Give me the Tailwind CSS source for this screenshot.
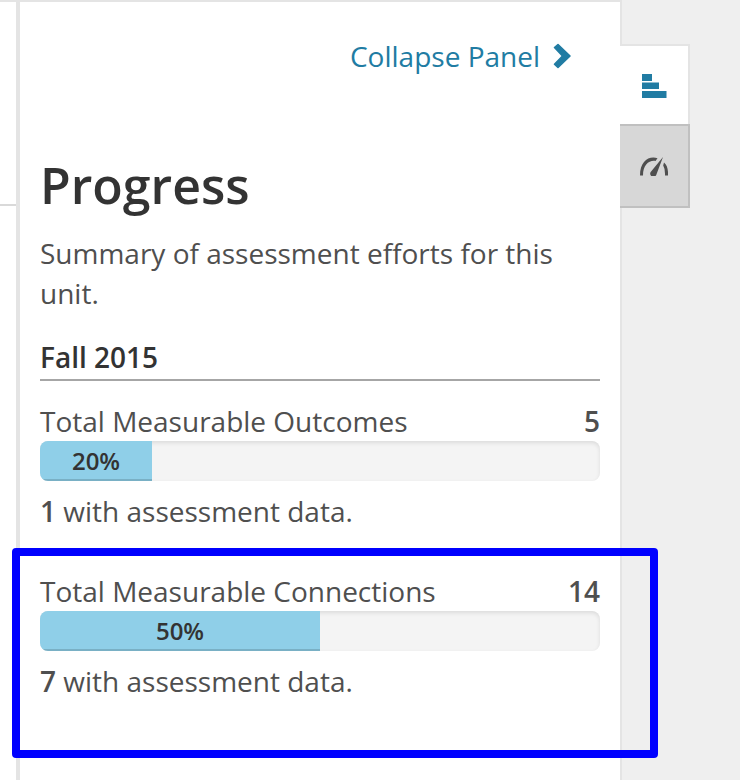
<!DOCTYPE html>
<html lang="en">
<head>
  <meta charset="UTF-8">
  <meta name="viewport" content="width=device-width, initial-scale=1.0">
  <title>Progress</title>
  <script src="https://cdn.jsdelivr.net/npm/@tailwindcss/browser@4"></script>
</head>
<body class="bg-[#efefef] font-['Open_Sans',sans-serif] text-[28px] leading-10 text-[#4f4f4f]">
  <div class="flex min-h-screen overflow-hidden">
    <!-- Edge of the page content -->
    <div class="w-4 shrink-0 border-t-2 border-[#e4e4e4] bg-white">
      <div class="h-51 border-b-2 border-[#d9d9d9]"></div>
    </div>

    <!-- Side panel -->
    <main class="min-w-0 flex-1 border-t-2 border-r-2 border-l-4 border-[#e4e4e4] bg-white px-5 pt-[34px]">
      <div class="flex justify-end pr-7">
        <button type="button" class="flex items-center gap-3 text-[#217ca3]">
          Collapse Panel
          <svg class="h-7 w-5" viewBox="0 0 20 28" fill="currentColor" stroke="currentColor" stroke-width="1" stroke-linejoin="round" aria-hidden="true">
            <path d="M2.500 5.500 6 2.500 18 14 6 25.500 2.500 22.200 10.500 14z" stroke-width="1.600" />
          </svg>
        </button>
      </div>

      <h1 class="mt-[79px] text-[50px] leading-[60px] font-semibold text-[#333]">Progress</h1>
      <p class="mt-[18px]">Summary of assessment efforts for this unit.</p>
      <h2 class="mt-6 border-b-2 border-[#a6a6a6] pb-0.5 font-semibold text-[#333]">Fall 2015</h2>

      <section class="mt-5">
        <div class="flex justify-between">
          <span id="outcomes-label">Total Measurable Outcomes</span>
          <strong class="font-semibold">5</strong>
        </div>
        <div class="h-10 overflow-hidden rounded-lg bg-[#f4f4f4] shadow-[inset_0_2px_4px_rgba(0,0,0,0.1)]" role="progressbar" aria-labelledby="outcomes-label" aria-valuenow="20" aria-valuemin="0" aria-valuemax="100">
          <div class="h-full bg-[#8fcfe8] text-center text-2xl leading-10 font-semibold text-[#333] shadow-[inset_0_-2px_0_rgba(0,0,0,0.15)]" style="width: 20%">20%</div>
        </div>
        <p class="mt-2.5"><strong class="font-semibold">1</strong> with assessment data.</p>
      </section>

      <section class="relative mt-10">
        <div class="flex justify-between">
          <span id="connections-label">Total Measurable Connections</span>
          <strong class="font-semibold">14</strong>
        </div>
        <div class="h-10 overflow-hidden rounded-lg bg-[#f4f4f4] shadow-[inset_0_2px_4px_rgba(0,0,0,0.1)]" role="progressbar" aria-labelledby="connections-label" aria-valuenow="50" aria-valuemin="0" aria-valuemax="100">
          <div class="h-full bg-[#8fcfe8] text-center text-2xl leading-10 font-semibold text-[#333] shadow-[inset_0_-2px_0_rgba(0,0,0,0.15)]" style="width: 50%">50%</div>
        </div>
        <p class="mt-2.5"><strong class="font-semibold">7</strong> with assessment data.</p>
        <!-- Highlight frame -->
        <div class="pointer-events-none absolute -top-[23px] -right-[58px] -bottom-[57px] -left-7 rounded-sm border-8 border-[#00f]"></div>
      </section>
    </main>

    <!-- Panel tabs -->
    <nav class="-ml-0.5 w-[120px] shrink-0 pt-11">
      <button type="button" aria-label="Progress" class="flex h-20 w-[70px] items-center justify-center border-t-2 border-r-2 border-[#e4e4e4] bg-white pt-0.5 text-[#217ca3]">
        <svg class="h-6 w-[26px]" viewBox="0 0 26 24" fill="currentColor" aria-hidden="true">
          <path d="M1 0h10v7H1zM1 8.500h17v6.500H1zM1 17h24.500v7H1z" />
        </svg>
      </button>
      <button type="button" aria-label="Dashboard" class="flex h-21 w-[70px] items-center justify-center border-y-2 border-r-2 border-[#c0c0c0] bg-[#d7d7d7] text-[#4f4f4f]">
        <svg class="h-5 w-7" viewBox="0 0 28 20" fill="currentColor" aria-hidden="true">
          <path d="M17.500 2.200C9-.500 0 5 0 19.500h3C3 9 9 4 15.500 5z" />
          <path d="M23 1 11.500 15a3.200 3.200 0 1 0 5 3.200z" />
          <path d="M24 6.500 23.200 9.500Q25.300 13 25 19.500h3C28.300 13 27 9 24 6.500z" />
        </svg>
      </button>
    </nav>
  </div>
</body>
</html>
